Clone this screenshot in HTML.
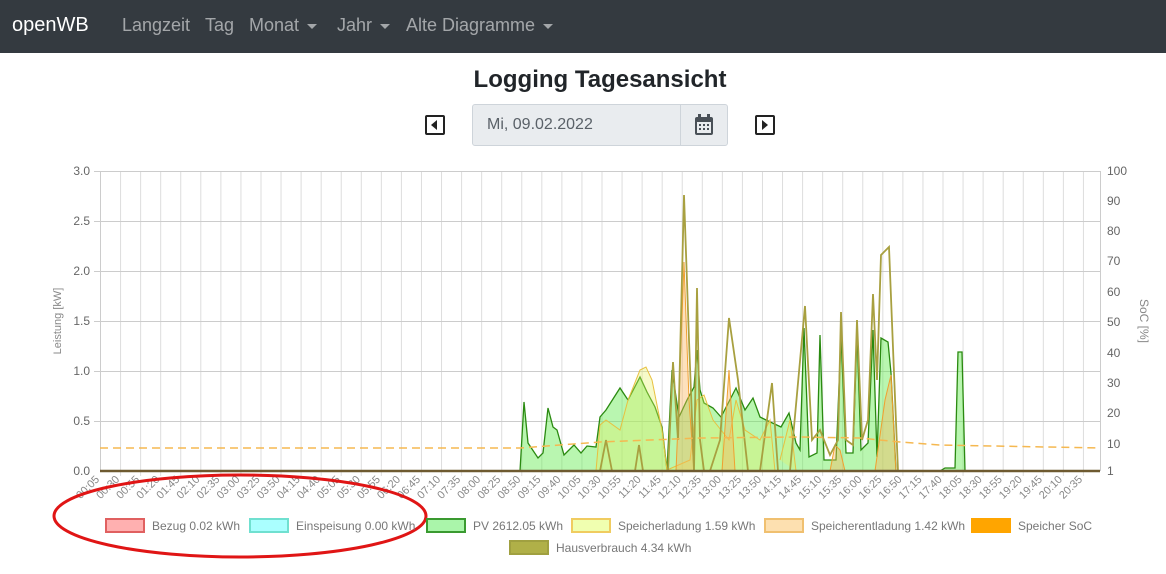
<!DOCTYPE html>
<html><head><meta charset="utf-8"><style>
body{margin:0;width:1166px;height:574px;overflow:hidden;background:#fff;font-family:"Liberation Sans",sans-serif;position:relative}
.nav{position:absolute;left:0;top:0;width:1166px;height:53px;background:#343a40}
.nav span{position:absolute;top:15px;font-size:18px;color:rgba(255,255,255,.55)}
.nav .brand{color:#fff;font-size:20px;top:14px;left:12px}
.car{display:inline-block;width:0;height:0;border-left:5px solid transparent;border-right:5px solid transparent;border-top:5px solid rgba(255,255,255,.55);vertical-align:middle;margin-left:8px}
h1{position:absolute;top:66px;left:0;width:1200px;text-align:center;margin:0;font-size:24px;font-weight:bold;color:#212529}
.inp{position:absolute;left:472px;top:104px;width:254px;height:40px;background:#e9ecef;border:1px solid #ced4da;border-radius:3px}
.inp .t{position:absolute;left:14px;top:11px;font-size:16px;color:#5a6168}
.inp .d{position:absolute;left:207px;top:0;width:1px;height:40px;background:#ced4da}
.btn{position:absolute;top:115px;width:16px;height:16px;border:2px solid #222;border-radius:2px}
.lg{position:absolute;font-size:12px;color:#777;white-space:nowrap}
.lg i{display:inline-block;width:36px;height:11px;border:2px solid;vertical-align:-3px;margin-right:7px}
</style></head><body>
<div class="nav">
<span class="brand">openWB</span>
<span style="left:122px">Langzeit</span>
<span style="left:205px">Tag</span>
<span style="left:249px">Monat<i class="car"></i></span>
<span style="left:337px">Jahr<i class="car"></i></span>
<span style="left:406px">Alte Diagramme<i class="car"></i></span>
</div>
<h1>Logging Tagesansicht</h1>
<div class="btn" style="left:425px"><div style="position:absolute;left:4px;top:3px;border-top:5px solid transparent;border-bottom:5px solid transparent;border-right:6px solid #222"></div></div>
<div class="btn" style="left:755px"><div style="position:absolute;left:5px;top:3px;border-top:5px solid transparent;border-bottom:5px solid transparent;border-left:6px solid #222"></div></div>
<div class="inp"><span class="t">Mi, 09.02.2022</span><div class="d"></div>
<svg style="position:absolute;left:221px;top:9px" width="20" height="22" viewBox="0 0 20 22"><rect x="1" y="3" width="18" height="18" rx="2" fill="#495057"/><rect x="3" y="8" width="14" height="11" fill="#e9ecef"/><rect x="4" y="0" width="3" height="5" fill="#495057"/><rect x="13" y="0" width="3" height="5" fill="#495057"/><g fill="#495057"><rect x="5" y="10" width="2" height="2"/><rect x="9" y="10" width="2" height="2"/><rect x="13" y="10" width="2" height="2"/><rect x="5" y="14" width="2" height="2"/><rect x="9" y="14" width="2" height="2"/><rect x="13" y="14" width="2" height="2"/></g></svg>
</div>
<svg style="position:absolute;left:0;top:0" width="1166" height="574" id="c">
<g stroke="#ddd" stroke-width="1" id="vg"></g>
<g stroke="#ccc" stroke-width="1">
<line x1="94" y1="171.5" x2="1100" y2="171.5"/><line x1="94" y1="221.5" x2="1100" y2="221.5"/><line x1="94" y1="271.5" x2="1100" y2="271.5"/><line x1="94" y1="321.5" x2="1100" y2="321.5"/><line x1="94" y1="371.5" x2="1100" y2="371.5"/><line x1="94" y1="421.5" x2="1100" y2="421.5"/><line x1="100.5" y1="171" x2="100.5" y2="471"/><line x1="1100.5" y1="171" x2="1100.5" y2="471"/>
</g>
<g font-size="12" fill="#666" text-anchor="end">
<text x="90" y="175">3.0</text><text x="90" y="225">2.5</text><text x="90" y="275">2.0</text><text x="90" y="325">1.5</text><text x="90" y="375">1.0</text><text x="90" y="425">0.5</text><text x="90" y="475">0.0</text>
</g>
<g font-size="12" fill="#666">
<text x="1107" y="175">100</text><text x="1107" y="205">90</text><text x="1107" y="235">80</text><text x="1107" y="265">70</text><text x="1107" y="296">60</text><text x="1107" y="326">50</text><text x="1107" y="357">40</text><text x="1107" y="387">30</text><text x="1107" y="417">20</text><text x="1107" y="448">10</text><text x="1107" y="475">1</text>
</g>
<text transform="translate(61,321) rotate(-90)" font-size="11" fill="#888" text-anchor="middle">Leistung [kW]</text>
<text transform="translate(1140,321) rotate(90)" font-size="12" fill="#888" text-anchor="middle">SoC [%]</text>
<path d="M516,471 L520,471 524,402 528,443 538,458 543,453 548,408 553,427 557,430 564,455 574,445 581,453 587,446 596,447 600,417 606,410 620,388 628,400 640,377 647,392 655,407 662,427 667,470 672,370 679,417 687,400 694,387 697,350 700,390 704,403 713,408 721,417 736,388 745,410 753,398 760,417 766,420 781,427 789,413 796,443 800,450 804,328 809,457 817,453 820,335 824,460 836,460 841,337 846,453 853,453 857,333 861,450 868,443 873,330 877,457 881,338 888,342 891,373 896,471 Z" fill="rgba(100,235,80,0.45)" stroke="#2a8a10" stroke-width="1.3"/>
<path d="M596,471 L600,425 606,420 620,430 628,400 640,370 646,367 652,380 662,430 667,470 690,460 697,400 704,395 713,420 721,430 729,440 736,400 745,430 760,440 770,420 775,471 M780,460 790,420 796,471" fill="rgba(230,240,100,0.35)" stroke="#e8c040" stroke-width="1"/>
<path d="M676,471 L679,400 684,262 689,400 694,471 M722,471 729,370 735,471 M830,471 835,445 840,450 845,471 M875,471 885,400 891,375 896,471" fill="rgba(250,180,90,0.4)" stroke="#f0a030" stroke-width="1"/>
<path d="M600,471 L606,440 612,471 M635,471 639,445 643,471 M668,471 673,362 678,440 684,195 689,340 694,471 L697,288 700,440 704,471 M710,471 720,440 729,318 738,380 748,471 M760,471 772,383 778,471 M790,471 805,306 812,440 820,430 830,455 838,440 841,312 846,440 853,445 857,320 862,440 868,420 873,294 877,380 881,255 889,247 894,373 898,471" fill="none" stroke="#a8a040" stroke-width="1.8"/>
<path d="M940,471 L945,468 955,468 958,352 962,352 965,471" fill="rgba(100,235,80,0.45)" stroke="#2a8a10" stroke-width="1.3"/>
<path d="M100,448 L520,448 L600,442 700,438 800,437 860,438 900,442 940,445 1100,448" fill="none" stroke="#f5b850" stroke-width="1.5" stroke-dasharray="8,5"/>
<line x1="100" y1="471" x2="1100" y2="471" stroke="#6e5a30" stroke-width="2.5"/>
<g id="xl" font-size="11" fill="#888" text-anchor="end"></g>
<ellipse cx="240" cy="516" rx="186" ry="41" fill="none" stroke="#e01515" stroke-width="3"/>
</svg>
<div class="lg" style="left:105px;top:518px"><i style="background:#ffb0b0;border-color:#e06060"></i>Bezug 0.02 kWh</div>
<div class="lg" style="left:249px;top:518px"><i style="background:#aaffff;border-color:#70e0d0"></i>Einspeisung 0.00 kWh</div>
<div class="lg" style="left:426px;top:518px"><i style="background:#aaf5aa;border-color:#3a9a30"></i>PV 2612.05 kWh</div>
<div class="lg" style="left:571px;top:518px"><i style="background:#f0ffb0;border-color:#f0cc60"></i>Speicherladung 1.59 kWh</div>
<div class="lg" style="left:764px;top:518px"><i style="background:#fde0b0;border-color:#f0c070"></i>Speicherentladung 1.42 kWh</div>
<div class="lg" style="left:971px;top:518px"><i style="background:#ffa500;border-color:#ffa500"></i>Speicher SoC</div>
<div class="lg" style="left:509px;top:540px"><i style="background:#b0b048;border-color:#a0a040"></i>Hausverbrauch 4.34 kWh</div>
<script>
var L="00:05 00:30 00:55 01:20 01:45 02:10 02:35 03:00 03:25 03:50 04:15 04:40 05:05 05:30 05:55 06:20 06:45 07:10 07:35 08:00 08:25 08:50 09:15 09:40 10:05 10:30 10:55 11:20 11:45 12:10 12:35 13:00 13:25 13:50 14:15 14:45 15:10 15:35 16:00 16:25 16:50 17:15 17:40 18:05 18:30 18:55 19:20 19:45 20:10 20:35".split(" ");
var ns="http://www.w3.org/2000/svg",vg=document.getElementById("vg"),xl=document.getElementById("xl");
for(var i=0;i<L.length;i++){var x=100+i*20.06;
if(i>0){var l=document.createElementNS(ns,"line");l.setAttribute("x1",x+.5);l.setAttribute("x2",x+.5);l.setAttribute("y1",171);l.setAttribute("y2",476);vg.appendChild(l);}
var t=document.createElementNS(ns,"text");t.setAttribute("transform","translate("+x+",480) rotate(-45)");t.textContent=L[i];xl.appendChild(t);}
</script>
</body></html>
